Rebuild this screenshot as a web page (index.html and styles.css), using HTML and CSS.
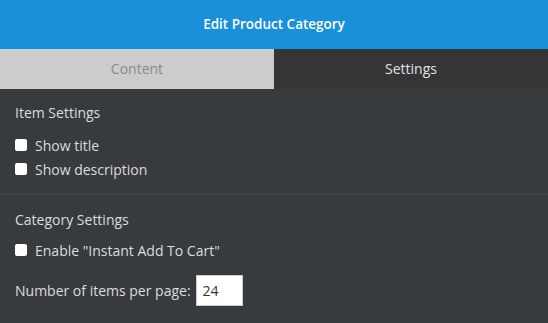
FILE: index.html
```html
<!DOCTYPE html>
<html lang="en">

<head>
    <meta charset="UTF-8" />
    <meta name="viewport" content="width=device-width, initial-scale=1.0" />
    <title>Edit Product Category</title>

    <link rel="stylesheet" href="styles.css">
</head>

<body>
    <div class="panel">
        <div class="panel-header">Edit Product Category</div>

        <div class="tabs">
            <div class="tab">Content</div>
            <div class="tab active">Settings</div>
        </div>

        <div class="section">
            <div class="section-title">Item Settings</div>
            <label class="check-row">
                <input type="checkbox" />
                <span>Show title</span>
            </label>
            <label class="check-row">
                <input type="checkbox" />
                <span>Show description</span>
            </label>
        </div>

        <div class="section">
            <div class="section-title">Category Settings</div>
            <label class="check-row">
                <input type="checkbox" />
                <span>Enable "Instant Add To Cart"</span>
            </label>
            <div class="field-row">
                <label for="perPage">Number of items per page:</label>
                <input type="text" id="perPage" value="24" />
            </div>
        </div>
    </div>
</body>

</html>
```

FILE: styles.css
```css
body {
    margin: 0;
    background-color: #373b3e;
    font-family: "Open Sans", Arial, sans-serif;
    font-size: 14px;
    color: #dcdcdc;
}

.panel {
    width: 548px;
    min-height: 323px;
    background-color: #373b3e;
}

.panel-header {
    height: 49px;
    line-height: 49px;
    background-color: #1990d9;
    color: #fff;
    text-align: center;
    font-weight: 600;
    font-size: 13.5px;
}

.tabs {
    display: flex;
    height: 40px;
}

.tab {
    flex: 1;
    line-height: 40px;
    text-align: center;
    background-color: #cccccc;
    color: #8a8a8a;
}

.tab.active {
    background-color: #353535;
    color: #e2e2e2;
}

.section {
    padding: 14px 15px 15px;
    border-bottom: 1px solid #44484b;
}

.section:last-child {
    border-bottom: none;
    padding-top: 15px;
}

.section-title {
    line-height: 20px;
    margin-bottom: 12px;
}

.section:last-child .section-title {
    margin-bottom: 10px;
}

.check-row {
    display: flex;
    align-items: center;
    height: 20px;
    margin-bottom: 4px;
}

.check-row:last-child {
    margin-bottom: 0;
}

.check-row input {
    appearance: none;
    width: 12px;
    height: 12px;
    margin: 0 8px 0 0;
    background-color: #fff;
    border-radius: 2px;
}

.field-row {
    display: flex;
    align-items: center;
    margin-top: 15px;
}

.field-row label {
    margin-right: 5px;
}

.field-row input {
    width: 47px;
    height: 31px;
    box-sizing: border-box;
    padding: 0 6px;
    border: 1px solid #ccc;
    font-family: "Open Sans", Arial, sans-serif;
    font-size: 14px;
    color: #333;
    background-color: #fff;
}
```
